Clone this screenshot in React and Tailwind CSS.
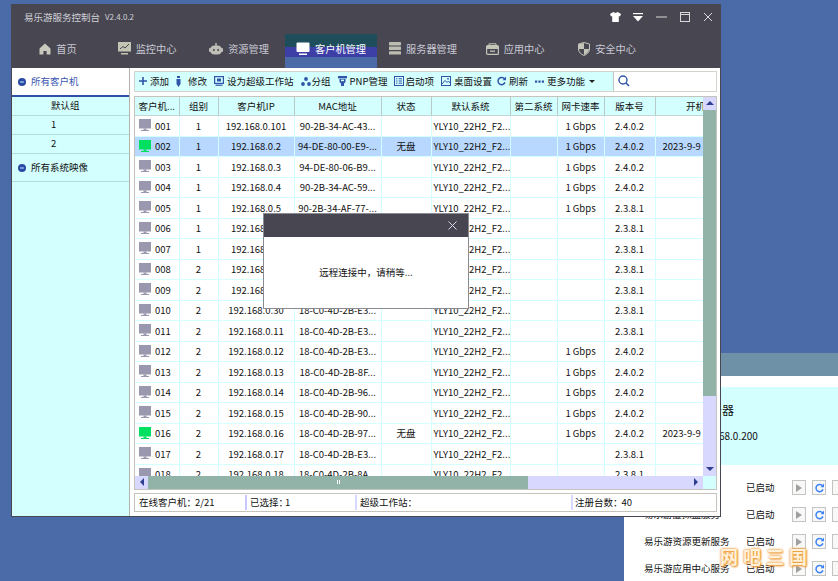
import React from "react";

const FONT = "font-['Noto_Sans_CJK_SC','Noto_Sans',sans-serif]";

const rows = [
  ["001", "1", "192.168.0.101", "90-2B-34-AC-43...", "", "1 Gbps", "2.4.0.2", ""],
  ["002", "1", "192.168.0.2", "94-DE-80-00-E9-...", "无盘", "1 Gbps", "2.4.0.2", "2023-9-9 12:10:08"],
  ["003", "1", "192.168.0.3", "94-DE-80-06-B9...", "", "1 Gbps", "2.4.0.2", ""],
  ["004", "1", "192.168.0.4", "90-2B-34-AC-59...", "", "1 Gbps", "2.4.0.2", ""],
  ["005", "1", "192.168.0.5", "90-2B-34-AF-77-...", "", "1 Gbps", "2.3.8.1", ""],
  ["006", "1", "192.168.0.6", "18-C0-4D-2B-E3...", "", "", "2.3.8.1", ""],
  ["007", "1", "192.168.0.7", "18-C0-4D-2B-E3...", "", "", "2.3.8.1", ""],
  ["008", "2", "192.168.0.8", "18-C0-4D-2B-E3...", "", "", "2.3.8.1", ""],
  ["009", "2", "192.168.0.9", "18-C0-4D-2B-E3...", "", "", "2.3.8.1", ""],
  ["010", "2", "192.168.0.30", "18-C0-4D-2B-E3...", "", "", "2.3.8.1", ""],
  ["011", "2", "192.168.0.11", "18-C0-4D-2B-E3...", "", "", "2.3.8.1", ""],
  ["012", "2", "192.168.0.12", "18-C0-4D-2B-E3...", "", "1 Gbps", "2.4.0.2", ""],
  ["013", "2", "192.168.0.13", "18-C0-4D-2B-8F...", "", "1 Gbps", "2.4.0.2", ""],
  ["014", "2", "192.168.0.14", "18-C0-4D-2B-96...", "", "1 Gbps", "2.4.0.2", ""],
  ["015", "2", "192.168.0.15", "18-C0-4D-2B-90...", "", "1 Gbps", "2.4.0.2", ""],
  ["016", "2", "192.168.0.16", "18-C0-4D-2B-97...", "无盘", "1 Gbps", "2.4.0.2", "2023-9-9 12:11:26"],
  ["017", "2", "192.168.0.17", "18-C0-4D-2B-E3...", "", "", "2.3.8.1", ""],
  ["018", "2", "192.168.0.18", "18-C0-4D-2B-8A...", "", "", "2.3.8.1", ""],
];

const COLS = "grid grid-cols-[44.5px_39px_76px_87px_50px_79px_47px_47px_51px_100px] w-[620.5px]";

function Monitor({ color }) {
  return (
    <svg width="12" height="13" viewBox="0 0 12 13" className="shrink-0">
      <rect x="0" y="0" width="12" height="9.5" fill={color} />
      <rect x="4.5" y="9.5" width="3" height="1.5" fill={color} />
      <rect x="2" y="11" width="8" height="1" fill={color} />
    </svg>
  );
}

const navIcons = {
  home: (
    <svg width="12" height="12" viewBox="0 0 12 12"><path d="M6 .5 11.5 5.5V11.5H7.6V8H4.4V11.5H.5V5.5Z" fill="#c9c9bd" /></svg>
  ),
  chart: (
    <svg width="13" height="13" viewBox="0 0 13 13">
      <rect x="0" y="0" width="13" height="9.5" fill="#c4c4b4" />
      <path d="M2 7 5 4.5 7 6 11 2" stroke="#484751" strokeWidth="1" fill="none" />
      <rect x="3" y="11" width="7" height="1.5" fill="#c4c4b4" />
    </svg>
  ),
  robot: (
    <svg width="14" height="12" viewBox="0 0 14 12">
      <rect x="6.3" y="0" width="1.4" height="3" fill="#c0c0b8" />
      <rect x="1" y="2.5" width="12" height="9" rx="4.5" fill="#c0c0b8" />
      <rect x="0" y="5" width="2" height="4" rx="1" fill="#c0c0b8" />
      <rect x="12" y="5" width="2" height="4" rx="1" fill="#c0c0b8" />
      <circle cx="4.8" cy="7" r="1" fill="#484751" />
      <circle cx="9.2" cy="7" r="1" fill="#484751" />
    </svg>
  ),
  pc: (
    <svg width="14" height="14" viewBox="0 0 14 14">
      <rect x="0.5" y="0.5" width="13" height="9.5" rx="1" fill="#fff" />
      <rect x="3" y="11.5" width="8" height="1.5" fill="#fff" />
    </svg>
  ),
  server: (
    <svg width="12" height="13" viewBox="0 0 12 13">
      <rect x="0" y="0" width="12" height="3.4" rx="0.6" fill="#bcbcb0" />
      <rect x="0" y="4.6" width="12" height="3.4" rx="0.6" fill="#bcbcb0" />
      <rect x="0" y="9.2" width="12" height="3.4" rx="0.6" fill="#bcbcb0" />
    </svg>
  ),
  app: (
    <svg width="13" height="12" viewBox="0 0 13 12">
      <path d="M3 2.5V.8H10V2.5" stroke="#c4c4b8" strokeWidth="1" fill="none" />
      <rect x="0.6" y="2.6" width="11.8" height="8.8" rx="1" fill="none" stroke="#c4c4b8" strokeWidth="1.2" />
      <rect x="1" y="3" width="11" height="3" fill="#c4c4b8" />
      <rect x="4" y="7.5" width="5" height="1.3" fill="#c4c4b8" />
    </svg>
  ),
  shield: (
    <svg width="12" height="14" viewBox="0 0 12 14">
      <path d="M6 .5 11.5 2V7C11.5 10.5 8.5 12.5 6 13.5 3.5 12.5.5 10.5.5 7V2Z" fill="#484751" stroke="#c4c4b8" strokeWidth="1" />
      <path d="M6 1V7H1V2.2Z" fill="#c4c4b8" />
      <path d="M6 7H11C11 10 8.5 12 6 13Z" fill="#c4c4b8" />
    </svg>
  ),
};

const navItems = [
  ["home", "首页"],
  ["chart", "监控中心"],
  ["robot", "资源管理"],
  ["pc", "客户机管理"],
  ["server", "服务器管理"],
  ["app", "应用中心"],
  ["shield", "安全中心"],
];

const B = "#2f55a8";
const toolIcons = {
  plus: (
    <svg width="8" height="8" viewBox="0 0 8 8"><path d="M4 0V8M0 4H8" stroke={B} strokeWidth="1.6" /></svg>
  ),
  pen: (
    <svg width="5" height="11" viewBox="0 0 5 11"><rect x="1" y="0" width="3" height="2" fill={B} /><path d="M.5 3H4.5V8L2.5 11 .5 8Z" fill={B} /></svg>
  ),
  star: (
    <svg width="10" height="10" viewBox="0 0 10 10">
      <rect x="0.6" y="0.6" width="8.8" height="6.8" fill="none" stroke={B} strokeWidth="1.2" />
      <rect x="3" y="2.5" width="4" height="3" fill={B} />
      <rect x="1.5" y="8.6" width="7" height="1.2" fill={B} />
    </svg>
  ),
  group: (
    <svg width="10" height="9" viewBox="0 0 10 9"><circle cx="5" cy="2" r="1.9" fill={B} /><circle cx="2" cy="7" r="1.9" fill={B} /><circle cx="8" cy="7" r="1.9" fill={B} /></svg>
  ),
  pnp: (
    <svg width="9" height="10" viewBox="0 0 9 10"><rect x="0" y="0" width="9" height="2.4" fill={B} /><path d="M1.5 3H7.5V6L6 7.5V10H3V7.5L1.5 6Z" fill={B} /><rect x="3" y="3.6" width="3" height="1.6" fill="#d4ffff" /></svg>
  ),
  boot: (
    <svg width="10" height="10" viewBox="0 0 10 10"><rect x="0.5" y="0.5" width="9" height="9" fill="none" stroke={B} /><path d="M2 2.8H3.4M4.6 2.8H8M2 5H3.4M4.6 5H8M2 7.2H3.4M4.6 7.2H8" stroke={B} /></svg>
  ),
  desk: (
    <svg width="10" height="10" viewBox="0 0 10 10"><rect x="0.5" y="0.5" width="9" height="9" fill="none" stroke={B} /><path d="M1 8 4 4.5 6 6.5 7.5 5 9 7" stroke={B} fill="none" /><circle cx="7" cy="2.8" r="0.9" fill={B} /></svg>
  ),
  refresh: (
    <svg width="9" height="10" viewBox="0 0 9 10"><path d="M7.6 3A3.6 3.6 0 1 0 8 6.4" stroke={B} strokeWidth="1.5" fill="none" /><path d="M9 .6V4.2H5.6Z" fill={B} /></svg>
  ),
  more: (
    <svg width="9" height="3" viewBox="0 0 9 3"><rect x="0" y="0.5" width="2.2" height="2.2" fill={B} /><rect x="3.4" y="0.5" width="2.2" height="2.2" fill={B} /><rect x="6.8" y="0.5" width="2.2" height="2.2" fill={B} /></svg>
  ),
};

const toolItems = [
  ["plus", "添加", "gap-[3px]"],
  ["pen", "修改", "gap-[7px]"],
  ["star", "设为超级工作站", "gap-[3px]"],
  ["group", "分组", "gap-[1px]"],
  ["pnp", "PNP管理", "gap-[3px]"],
  ["boot", "启动项", "gap-[1px]"],
  ["desk", "桌面设置", "gap-[3px]"],
  ["refresh", "刷新", "gap-[3px] -ml-[2px]"],
  ["more", "更多功能", "gap-[3px]"],
];

function Bullet() {
  return (
    <svg width="8" height="8" viewBox="0 0 8 8" className="shrink-0">
      <circle cx="4" cy="4" r="4" fill="#2a4aa8" />
      <path d="M2.2 4H5.8" stroke="#d4ffff" strokeWidth="1" />
    </svg>
  );
}

function Arrow({ dir }) {
  const d = { up: "M0 5 4 1 8 5Z", down: "M0 1 4 5 8 1Z", left: "M5 0 1 4 5 8Z", right: "M1 0 5 4 1 8Z" }[dir];
  return (
    <svg width="8" height="8" viewBox={dir === "left" || dir === "right" ? "0 0 6 8" : "0 0 8 6"}>
      <path d={d} fill="#2f3f8f" />
    </svg>
  );
}

function BackWindow() {
  const services = ["易乐游数据库服务", "易乐游虚拟盘服务", "易乐游资源更新服务", "易乐游应用中心服务"];
  return (
    <section className="absolute left-[624px] top-[353px] w-[214px] h-[228px] bg-white flex flex-col text-[9.5px] text-[#111]">
      <div className="h-[23px] bg-[#6f91a8] shrink-0" />
      <div className="mt-[11px] h-[78px] bg-[#d4ffff] shrink-0 pl-[72px] pt-[14px] flex flex-col gap-[11px] text-[12px] leading-[17px]">
        <span className="-ml-[34px] whitespace-nowrap">易乐游服务器</span>
        <span className="text-[10px] leading-[14px] -ml-[2px] whitespace-nowrap">192.168.0.200</span>
      </div>
      <div className="flex flex-col pt-[9px] pl-[20px]">
        {services.map((label) => (
          <div key={label} className="h-[27px] flex items-center whitespace-nowrap">
            <span className="w-[102px] shrink-0">{label}</span>
            <span className="w-[46px] shrink-0">已启动</span>
            <div className="flex gap-[6px] shrink-0">
              <span className="w-[14px] h-[15px] border border-[#c4c4c0] bg-[#f8f8f8] flex items-center justify-center">
                <svg width="6" height="8" viewBox="0 0 6 8"><path d="M0 0 6 4 0 8Z" fill="#a0a0a0" /></svg>
              </span>
              <span className="w-[14px] h-[15px] border border-[#c4c4c0] bg-[#f8f8f8] flex items-center justify-center">
                <svg width="9" height="10" viewBox="0 0 9 10"><path d="M7.6 3A3.6 3.6 0 1 0 8 6.4" stroke="#3b82f6" strokeWidth="1.5" fill="none" /><path d="M9 .6V4.2H5.6Z" fill="#3b82f6" /></svg>
              </span>
              <span className="w-[14px] h-[15px] border border-[#c4c4c0] bg-[#f8f8f8]" />
            </div>
          </div>
        ))}
      </div>
    </section>
  );
}

function Sidebar() {
  return (
    <aside className="w-[118px] shrink-0 bg-[#d4ffff] border-r border-[#b4b4ac] text-[9.5px] text-[#111]">
      <div className="h-[29px] bg-white border-b-2 border-[#2f4fa8] flex items-center gap-[5px] pl-[6px] pt-[1px] text-[#3a55b0]">
        <Bullet />
        <span>所有客户机</span>
      </div>
      {["默认组", "1", "2"].map((t) => (
        <div key={t} className="h-[19px] border-b border-[#b4dcdc] flex items-center pl-[39px]">
          {t}
        </div>
      ))}
      <div className="h-[28px] border-b border-[#b4dcdc] flex items-center gap-[5px] pl-[6px] pt-[1px]">
        <Bullet />
        <span>所有系统映像</span>
      </div>
    </aside>
  );
}

function Toolbar() {
  return (
    <div className="h-[21px] shrink-0 border border-[#d4d4cc] bg-[#d4ffff] flex text-[9.5px] text-[#111]">
      <div className="flex-1 flex items-center pl-[4px] gap-[7px] whitespace-nowrap">
        {toolItems.map(([ic, label, extra]) => (
          <div key={label} className={`flex items-center ${extra}`}>
            {toolIcons[ic]}
            <span>{label}</span>
          </div>
        ))}
        <svg width="6" height="3" viewBox="0 0 6 3" className="-ml-[3px]"><path d="M0 0H6L3 3Z" fill="#222" /></svg>
      </div>
      <div className="w-[103px] shrink-0 bg-white border-l border-[#c4c4bc] flex items-center pl-[4px]">
        <svg width="12" height="12" viewBox="0 0 12 12">
          <circle cx="5" cy="5" r="4" fill="none" stroke="#2f55a8" strokeWidth="1.4" />
          <path d="M8 8 11 11" stroke="#2f55a8" strokeWidth="1.6" />
        </svg>
      </div>
    </div>
  );
}

function Table() {
  const headers = ["客户机...", "组别", "客户机IP", "MAC地址", "状态", "默认系统", "第二系统", "网卡速率", "版本号", "开机时间"];
  return (
    <div className="h-[394px] mt-[4px] shrink-0 border border-[#c4c4bc] flex flex-col text-[9.5px] text-[#111]">
      <div className="flex flex-1 min-h-0">
        <div className="w-[568px] overflow-hidden">
          <div className={`${COLS} h-[19.5px] bg-[#d4ffff] border-b border-[#c4d4d4]`}>
            {headers.map((h) => (
              <div key={h} className="border-r border-[#b8c8c8] flex items-center justify-center whitespace-nowrap overflow-hidden">
                {h}
              </div>
            ))}
          </div>
          {rows.map((r) => {
            const on = r[4] === "无盘";
            const sel = r[0] === "002";
            const cell = "border-r border-[#d4ffff] flex items-center justify-center whitespace-nowrap overflow-hidden";
            return (
              <div key={r[0]} className={`${COLS} h-[20.5px] border-b border-[#d4ffff] ${sel ? "bg-[#b8d8ff]" : "bg-white"}`}>
                <div className="border-r border-[#d4ffff] flex items-center pl-[4px] gap-[4px]">
                  <Monitor color={on ? "#00e060" : "#9a98ae"} />
                  <span>{r[0]}</span>
                </div>
                <div className={cell}>{r[1]}</div>
                <div className={cell}>{r[2]}</div>
                <div className={cell}>{r[3]}</div>
                <div className={cell}>{r[4]}</div>
                <div className="border-r border-[#d4ffff] flex items-center pl-[2px] whitespace-nowrap overflow-hidden">YLY10_22H2_F2...</div>
                <div className={cell} />
                <div className={cell}>{r[5]}</div>
                <div className={cell}>{r[6]}</div>
                <div className="border-r border-[#d4ffff] flex items-center pl-[7px] whitespace-nowrap overflow-hidden">{r[7]}</div>
              </div>
            );
          })}
        </div>
        <div className="w-[13px] shrink-0 bg-[#d8d8ff] flex flex-col">
          <div className="h-[13px] flex items-center justify-center"><Arrow dir="up" /></div>
          <div className="h-[286px] bg-[#92b4a8]" />
          <div className="flex-1 flex items-end justify-center pb-[3px]"><Arrow dir="down" /></div>
        </div>
      </div>
      <div className="h-[13px] shrink-0 flex">
        <div className="w-[568px] bg-[#d8d8ff] flex">
          <div className="w-[13px] flex items-center justify-center"><Arrow dir="left" /></div>
          <div className="w-[380px] bg-[#92b4a8] flex items-center justify-center">
            <span className="flex gap-[1px]">
              <i className="w-[1px] h-[4px] bg-white" />
              <i className="w-[1px] h-[4px] bg-white" />
            </span>
          </div>
          <div className="flex-1 flex items-center justify-end pr-[3px]"><Arrow dir="right" /></div>
        </div>
        <div className="w-[13px] bg-[#d4ffff]" />
      </div>
    </div>
  );
}

function Status() {
  return (
    <div className="h-[19px] mt-[3px] shrink-0 border border-[#c4c4bc] bg-white flex items-center text-[9.5px] text-[#111] whitespace-nowrap">
      <div className="w-[112px] pl-[4px] border-r-2 border-[#c8c8ff] h-[15px] flex items-center">在线客户机：<span className="-ml-[1px]">2/21</span></div>
      <div className="w-[110px] pl-[3px] border-r-2 border-[#d8d8ff] h-[15px] flex items-center">已选择：<span className="-ml-[3px]">1</span></div>
      <div className="w-[216px] pl-[3px] border-r-2 border-[#d8d8ff] h-[15px] flex items-center">超级工作站：</div>
      <div className="pl-[2px] flex items-center">注册台数：<span className="-ml-[1px]">40</span></div>
    </div>
  );
}

function MainWindow() {
  return (
    <section className="absolute left-[11px] top-[4px] w-[710px] h-[513px] bg-[#484751] flex flex-col">
      <div className="h-[30px] shrink-0 flex items-center pl-[13px] pr-[8px] pb-[4px] text-[#d0d0d8]">
        <span className="text-[9.5px]">易乐游服务控制台</span>
        <span className="text-[8px] ml-[5px]">V2.4.0.2</span>
        <div className="ml-auto flex items-center gap-[12px]">
          <svg width="11" height="10" viewBox="0 0 11 10"><path d="M3.3 0 5.5 1 7.7 0 11 2 10 4.5 8.8 4V10H2.2V4L1 4.5 0 2Z" fill="#fff" /></svg>
          <svg width="10" height="9" viewBox="0 0 10 9"><rect x="0" y="0" width="10" height="1.2" fill="#fff" /><path d="M0 3H10L5 8.5Z" fill="#fff" /></svg>
          <svg width="11" height="10" viewBox="0 0 11 10" className="ml-[1px]"><path d="M0 5H11" stroke="#d8d8d8" /></svg>
          <svg width="10" height="10" viewBox="0 0 10 10" className="ml-[1px]"><rect x="0.5" y="0.5" width="9" height="9" fill="none" stroke="#d8d8d8" /><path d="M0 2.5H10" stroke="#d8d8d8" /></svg>
          <svg width="10" height="10" viewBox="0 0 10 10" className="ml-[1px]"><path d="M1 1 9 9M9 1 1 9" stroke="#d8d8e8" /></svg>
        </div>
      </div>
      <nav className="h-[33.5px] shrink-0 flex -ml-[2px]">
        {navItems.map(([ic, label], i) => (
          <div
            key={label}
            className={`w-[92px] flex items-center justify-center gap-[5px] pb-[4px] text-[10.2px] ${
              i === 3
                ? "bg-[linear-gradient(#1e4d5c_0_37%,#3d3fa6_37%_68%,#4a6aa8_68%)] text-white"
                : "text-[#c8c8d4]"
            } ${i === 0 ? "pl-[6px]" : ""}`}
          >
            {navIcons[ic]}
            <span>{label}</span>
          </div>
        ))}
      </nav>
      <div className="flex flex-1 min-h-0 mx-[1px] mb-[1px] bg-white">
        <Sidebar />
        <div className="flex-1 min-w-0 flex flex-col pl-[4px] pr-[3px] pt-[3px]">
          <Toolbar />
          <Table />
          <Status />
        </div>
      </div>
    </section>
  );
}

function Dialog() {
  return (
    <section className="absolute left-[263px] top-[213px] w-[206px] h-[96px] border border-[#8a8a92] bg-white flex flex-col">
      <div className="h-[23px] bg-[#484751] flex items-center justify-end pr-[11px]">
        <svg width="9" height="9" viewBox="0 0 9 9"><path d="M.5.5 8.5 8.5M8.5.5.5 8.5" stroke="#d8d8ec" /></svg>
      </div>
      <div className="flex-1 flex items-center justify-center text-[9.5px] text-[#111]">远程连接中，请稍等...</div>
    </section>
  );
}

export default function App() {
  return (
    <div className={`relative w-[838px] h-[581px] overflow-hidden bg-[#4a6aa8] ${FONT}`}>
      <BackWindow />
      <MainWindow />
      <Dialog />
      <div className="absolute left-[720px] top-[545px] text-[18px] leading-[22px] font-bold tracking-[5px] text-[#fff0d8] whitespace-nowrap [text-shadow:0_0_2px_#f0a040,0_0_3px_#f0a040,1px_1px_2px_#e89030]">
        网吧三国
      </div>
    </div>
  );
}
